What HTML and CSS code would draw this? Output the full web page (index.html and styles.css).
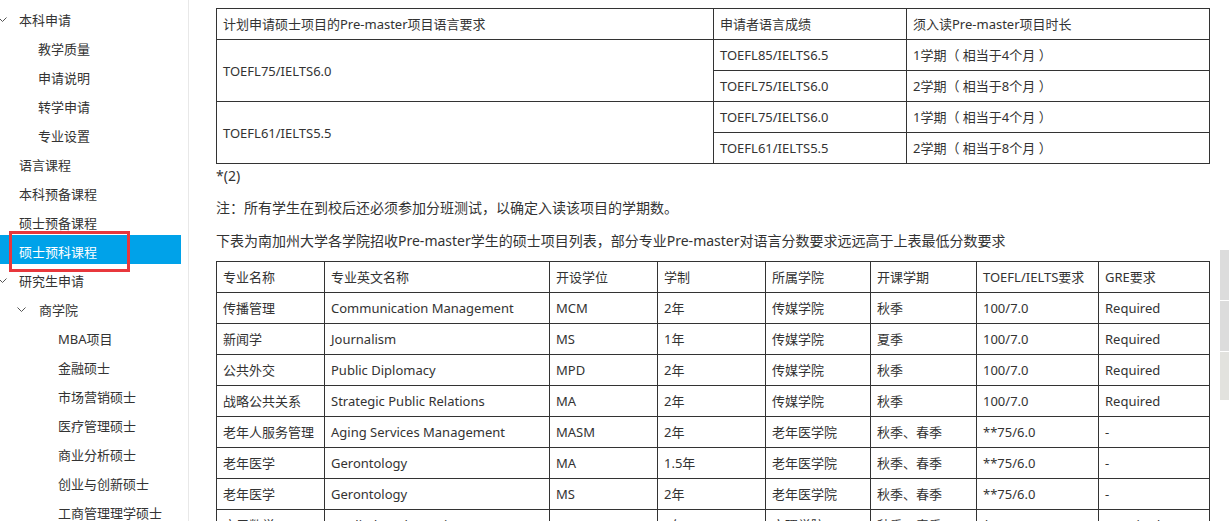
FILE: index.html
```html
<!DOCTYPE html>
<html lang="zh-CN">
<head>
    <meta charset="UTF-8">
    <title>硕士预科课程</title>
    <link rel="stylesheet" href="styles.css">
</head>
<body>
    <div class="sidebar">
        <ul class="menu">
            <li class="item lv1"><svg class="arrow" width="9" height="6" viewBox="0 0 9 6"><polyline points="0.5,0.5 4.5,4.5 8.5,0.5" fill="none" stroke="#555" stroke-width="1"/></svg>本科申请</li>
            <li class="item lv2">教学质量</li>
            <li class="item lv2">申请说明</li>
            <li class="item lv2">转学申请</li>
            <li class="item lv2">专业设置</li>
            <li class="item lv1 plain">语言课程</li>
            <li class="item lv1 plain">本科预备课程</li>
            <li class="item lv1 plain">硕士预备课程</li>
            <li class="item lv1 plain active">硕士预科课程<span class="mark"></span></li>
            <li class="item lv1"><svg class="arrow" width="9" height="6" viewBox="0 0 9 6"><polyline points="0.5,0.5 4.5,4.5 8.5,0.5" fill="none" stroke="#555" stroke-width="1"/></svg>研究生申请</li>
            <li class="item lv2 sub"><svg class="arrow" width="9" height="6" viewBox="0 0 9 6"><polyline points="0.5,0.5 4.5,4.5 8.5,0.5" fill="none" stroke="#555" stroke-width="1"/></svg>商学院</li>
            <li class="item lv3">MBA项目</li>
            <li class="item lv3">金融硕士</li>
            <li class="item lv3">市场营销硕士</li>
            <li class="item lv3">医疗管理硕士</li>
            <li class="item lv3">商业分析硕士</li>
            <li class="item lv3">创业与创新硕士</li>
            <li class="item lv3">工商管理理学硕士</li>
        </ul>
    </div>

    <div class="main">
        <table class="grid lang">
            <colgroup>
                <col style="width:497px">
                <col style="width:193px">
                <col>
            </colgroup>
            <tr>
                <td>计划申请硕士项目的Pre-master项目语言要求</td>
                <td>申请者语言成绩</td>
                <td>须入读Pre-master项目时长</td>
            </tr>
            <tr>
                <td rowspan="2">TOEFL75/IELTS6.0</td>
                <td>TOEFL85/IELTS6.5</td>
                <td>1学期（ 相当于4个月 ）</td>
            </tr>
            <tr>
                <td>TOEFL75/IELTS6.0</td>
                <td>2学期（ 相当于8个月 ）</td>
            </tr>
            <tr>
                <td rowspan="2">TOEFL61/IELTS5.5</td>
                <td>TOEFL75/IELTS6.0</td>
                <td>1学期（ 相当于4个月 ）</td>
            </tr>
            <tr>
                <td>TOEFL61/IELTS5.5</td>
                <td>2学期（ 相当于8个月 ）</td>
            </tr>
        </table>

        <p class="note first">*(2)</p>
        <p class="note">注：所有学生在到校后还必须参加分班测试，以确定入读该项目的学期数。</p>
        <p class="note">下表为南加州大学各学院招收Pre-master学生的硕士项目列表，部分专业Pre-master对语言分数要求远远高于上表最低分数要求</p>

        <table class="grid programs">
            <colgroup>
                <col style="width:108px">
                <col style="width:225px">
                <col style="width:108px">
                <col style="width:108px">
                <col style="width:105px">
                <col style="width:106px">
                <col style="width:122px">
                <col>
            </colgroup>
            <tr>
                <td>专业名称</td><td>专业英文名称</td><td>开设学位</td><td>学制</td><td>所属学院</td><td>开课学期</td><td>TOEFL/IELTS要求</td><td>GRE要求</td>
            </tr>
            <tr>
                <td>传播管理</td><td>Communication Management</td><td>MCM</td><td>2年</td><td>传媒学院</td><td>秋季</td><td>100/7.0</td><td>Required</td>
            </tr>
            <tr>
                <td>新闻学</td><td>Journalism</td><td>MS</td><td>1年</td><td>传媒学院</td><td>夏季</td><td>100/7.0</td><td>Required</td>
            </tr>
            <tr>
                <td>公共外交</td><td>Public Diplomacy</td><td>MPD</td><td>2年</td><td>传媒学院</td><td>秋季</td><td>100/7.0</td><td>Required</td>
            </tr>
            <tr>
                <td>战略公共关系</td><td>Strategic Public Relations</td><td>MA</td><td>2年</td><td>传媒学院</td><td>秋季</td><td>100/7.0</td><td>Required</td>
            </tr>
            <tr>
                <td>老年人服务管理</td><td>Aging Services Management</td><td>MASM</td><td>2年</td><td>老年医学院</td><td>秋季、春季</td><td>**75/6.0</td><td>-</td>
            </tr>
            <tr>
                <td>老年医学</td><td>Gerontology</td><td>MA</td><td>1.5年</td><td>老年医学院</td><td>秋季、春季</td><td>**75/6.0</td><td>-</td>
            </tr>
            <tr>
                <td>老年医学</td><td>Gerontology</td><td>MS</td><td>2年</td><td>老年医学院</td><td>秋季、春季</td><td>**75/6.0</td><td>-</td>
            </tr>
            <tr>
                <td>应用数学</td><td>Applied Mathematics</td><td>MA</td><td>2年</td><td>文理学院</td><td>秋季、春季</td><td>*61/5.5</td><td>Required</td>
            </tr>
        </table>
    </div>

    <!-- 右侧悬浮标签 -->
    <div class="side-tabs">
        <div class="tab"></div>
        <div class="tab"></div>
        <div class="tab light"></div>
    </div>
</body>
</html>
```

FILE: styles.css
```css
* {
    box-sizing: border-box;
    margin: 0;
    padding: 0;
}

html, body {
    height: 100%;
}

body {
    font-family: "Noto Sans", "Noto Sans CJK SC", sans-serif;
    font-size: 14px;
    color: #333333;
    background-color: #ffffff;
    display: flex;
    overflow: hidden;
}

.sidebar {
    width: 189px;
    flex-shrink: 0;
    border-right: 1px solid #e8e8e8;
    padding: 3px 7px 0 0;
    font-size: 13px;
}

.menu {
    list-style: none;
}

.item {
    position: relative;
    height: 29px;
    padding-top: 4px;
    line-height: 20px;
    display: flex;
    align-items: center;
    white-space: nowrap;
    color: #333333;
}

.arrow {
    flex-shrink: 0;
}

.lv1 {
    padding-left: 0;
}

.lv1 .arrow {
    margin-left: -2px;
    margin-right: 12px;
}

.lv1.plain {
    padding-left: 19px;
}

.lv2 {
    padding-left: 38px;
}

.lv2.sub {
    padding-left: 17px;
}

.lv2.sub .arrow {
    margin-right: 13px;
}

.lv3 {
    padding-left: 58px;
}

.active {
    background-color: #00a2e9;
    color: #ffffff;
}

/* 红色标注框 */
.mark {
    position: absolute;
    left: 9px;
    top: -4px;
    width: 121px;
    height: 41px;
    border: 3px solid #e8373c;
}

.main {
    flex: 1;
    padding: 8px 19px 0 27px;
}

.grid {
    width: 994px;
    table-layout: fixed;
    border-collapse: collapse;
    font-size: 13px;
}

.grid td {
    border: 1px solid #333333;
    height: 31px;
    padding: 0 6px;
    vertical-align: middle;
    line-height: 22px;
    white-space: nowrap;
    overflow: hidden;
}

.note {
    line-height: 22px;
    margin-bottom: 11px;
}

.note.first {
    margin-top: 1px;
    margin-bottom: 10px;
}

.programs {
    margin-top: -2px;
}

.side-tabs {
    position: fixed;
    right: 0;
    top: 250px;
    width: 9px;
}

.tab {
    height: 50px;
    margin-bottom: 1px;
    background-color: #dcdcdc;
}

.tab.light {
    margin-top: 1px;
    height: 48px;
    background-color: #e2e2de;
}
```
